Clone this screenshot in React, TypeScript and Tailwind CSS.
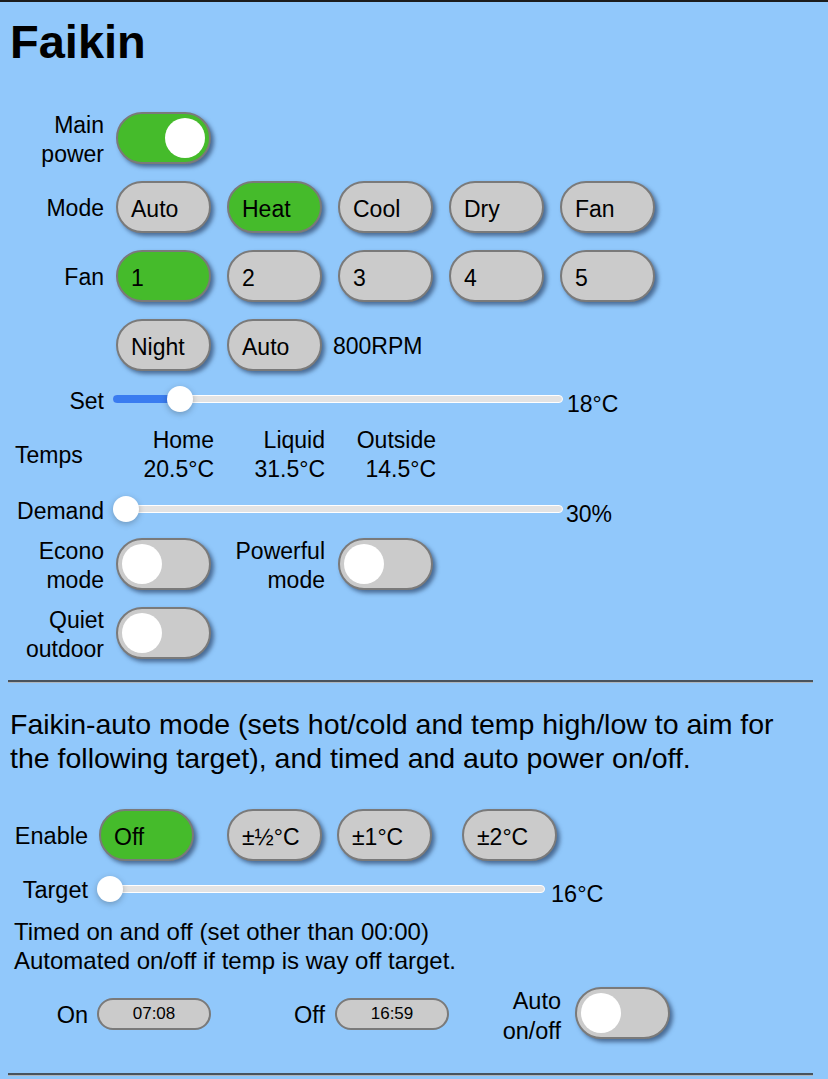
import clsx from 'clsx';

function Btn({ label, on, className }: { label: string; on?: boolean; className?: string }) {
  return (
    <div
      className={clsx(
        'flex h-[52px] w-[95px] shrink-0 items-center rounded-full border-2 border-[#7a7a7a] pl-[13px] pt-[5px] text-[23px] shadow-[3px_3px_4px_rgba(25,45,80,0.6)]',
        on ? 'bg-[#45bb2b]' : 'bg-[#cbcbcb]',
        className,
      )}
    >
      {label}
    </div>
  );
}

function Toggle({ on, className }: { on?: boolean; className?: string }) {
  return (
    <div
      className={clsx(
        'relative h-[52px] w-[95px] shrink-0 rounded-full border-2 border-[#7a7a7a] shadow-[3px_3px_4px_rgba(25,45,80,0.6)]',
        on ? 'bg-[#45bb2b]' : 'bg-[#cbcbcb]',
        className,
      )}
    >
      <div className={clsx('absolute top-[4px] h-[40px] w-[40px] rounded-full bg-white', on ? 'right-[4px]' : 'left-[4px]')} />
    </div>
  );
}

function Slider({ width, thumb, fill }: { width: number; thumb: number; fill?: boolean }) {
  return (
    <div className="relative flex h-[26px] shrink-0 items-center" style={{ width }}>
      <div className="h-[8px] w-full rounded-full border border-white bg-[#e3e3e3]" />
      {fill && (
        <div className="absolute left-0 h-[8px] rounded-l-full bg-[#3a7cf0]" style={{ width: thumb }} />
      )}
      <div
        className="absolute top-0 h-[26px] w-[26px] rounded-full bg-white shadow-[0_2px_6px_rgba(0,0,0,0.25)]"
        style={{ left: thumb - 13 }}
      />
    </div>
  );
}

function Label({ children, className }: { children: React.ReactNode; className?: string }) {
  return <div className={clsx('w-[104px] shrink-0 pt-[4px] text-right leading-[29px]', className)}>{children}</div>;
}

function Rule() {
  return <div className="ml-[8px] mr-[15px] h-[3px] border-b border-[#aeb6bd] bg-[#48535d]" />;
}

export default function App() {
  return (
    <div className="min-h-screen w-full border-t-2 border-[#1c1c1c] bg-[#91c8fb] font-['Liberation_Sans',Arial,sans-serif] text-[23px] text-black">
      <h1 className="pl-[10px] pt-[16px] text-[47px] font-bold leading-[47px]">Faikin</h1>

      <div className="mt-[38px]">
        <div className="flex h-[69px] items-center gap-[12px]">
          <Label>
            Main
            <br />
            power
          </Label>
          <Toggle on />
        </div>

        <div className="flex h-[69px] items-center">
          <Label className="mr-[12px]">Mode</Label>
          <div className="flex gap-[16px]">
            <Btn label="Auto" />
            <Btn label="Heat" on />
            <Btn label="Cool" />
            <Btn label="Dry" />
            <Btn label="Fan" />
          </div>
        </div>

        <div className="flex h-[69px] items-center">
          <Label className="mr-[12px]">Fan</Label>
          <div className="flex gap-[16px]">
            <Btn label="1" on />
            <Btn label="2" />
            <Btn label="3" />
            <Btn label="4" />
            <Btn label="5" />
          </div>
        </div>

        <div className="flex h-[69px] items-center">
          <div className="w-[116px] shrink-0" />
          <div className="flex items-center gap-[16px]">
            <Btn label="Night" />
            <Btn label="Auto" />
          </div>
          <span className="ml-[11px] pt-[4px]">800RPM</span>
        </div>

        <div className="flex h-[40px] items-center">
          <Label className="mr-[9px]">Set</Label>
          <Slider width={450} thumb={67} fill />
          <span className="ml-[4px] mt-[10px]">18°C</span>
        </div>

        <div className="flex h-[72px] items-center leading-[29px]">
          <div className="w-[116px] shrink-0 pl-[15px]">Temps</div>
          <div className="flex gap-[13px] text-right">
            <div className="w-[98px]">
              Home
              <br />
              20.5°C
            </div>
            <div className="w-[98px]">
              Liquid
              <br />
              31.5°C
            </div>
            <div className="w-[98px]">
              Outside
              <br />
              14.5°C
            </div>
          </div>
        </div>

        <div className="flex h-[36px] items-center">
          <Label className="mr-[9px]">Demand</Label>
          <Slider width={450} thumb={13} />
          <span className="ml-[3px] mt-[10px]">30%</span>
        </div>

        <div className="flex h-[74px] items-center">
          <Label className="mr-[12px]">
            Econo
            <br />
            mode
          </Label>
          <Toggle />
          <div className="ml-[16px] mr-[13px] w-[98px] pt-[4px] text-right leading-[29px]">
            Powerful
            <br />
            mode
          </div>
          <Toggle />
        </div>

        <div className="flex h-[64px] items-center">
          <Label className="mr-[12px]">
            Quiet
            <br />
            outdoor
          </Label>
          <Toggle />
        </div>
      </div>

      <div className="mt-[15px]">
        <Rule />
      </div>

      <p className="mt-[24px] w-[800px] pl-[10px] text-[28.5px] leading-[34px]">
        Faikin-auto mode (sets hot/cold and temp high/low to aim for the following target), and timed and auto power
        on/off.
      </p>

      <div className="mt-[26px] flex h-[68px] items-center text-[23.5px]">
        <div className="w-[88px] shrink-0 pt-[4px] text-right">Enable</div>
        <Btn label="Off" on className="ml-[11px]" />
        <Btn label="±½°C" className="ml-[33px]" />
        <Btn label="±1°C" className="ml-[15px]" />
        <Btn label="±2°C" className="ml-[30px]" />
      </div>

      <div className="flex h-[40px] items-center text-[23.5px]">
        <div className="mr-[9px] w-[88px] shrink-0 pt-[4px] text-right">Target</div>
        <Slider width={448} thumb={13} />
        <span className="ml-[6px] mt-[12px]">16°C</span>
      </div>

      <div className="mt-[8px] pl-[14px] text-[24px] leading-[29px]">
        <div>Timed on and off (set other than 00:00)</div>
        <div>Automated on/off if temp is way off target.</div>
      </div>

      <div className="mt-[2px] flex h-[74px] items-center text-[23.5px]">
        <div className="mr-[9px] w-[88px] shrink-0 pt-[4px] text-right">On</div>
        <div className="flex h-[32px] w-[114px] shrink-0 items-center justify-center rounded-full border-2 border-[#7a7a7a] bg-[#cbcbcb] text-[17px]">
          07:08
        </div>
        <div className="mr-[10px] w-[114px] shrink-0 pt-[4px] text-right">Off</div>
        <div className="flex h-[32px] w-[114px] shrink-0 items-center justify-center rounded-full border-2 border-[#7a7a7a] bg-[#cbcbcb] text-[17px]">
          16:59
        </div>
        <div className="mr-[14px] w-[112px] shrink-0 pt-[4px] text-right leading-[30px]">
          Auto
          <br />
          on/off
        </div>
        <Toggle className="-mt-[2px]" />
      </div>

      <div className="mt-[22px]">
        <Rule />
      </div>
    </div>
  );
}
